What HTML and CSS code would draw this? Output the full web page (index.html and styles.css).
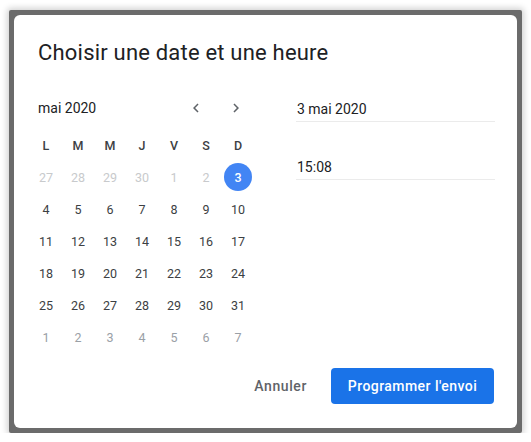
FILE: index.html
```html
<!DOCTYPE html>
<html lang="fr">
<head>
<meta charset="utf-8">
<link rel="stylesheet" href="styles.css">
</head>
<body>
<div class="frame">
  <div class="dialog">
    <h1 class="title">Choisir une date et une heure</h1>
    <div class="body">
      <div class="calendar">
        <div class="month-row">
          <span class="month">mai 2020</span>
          <div class="navs">
            <button class="nav" aria-label="Mois précédent"><svg viewBox="0 0 24 24" width="18" height="18"><path d="M15.41 7.41L14 6l-6 6 6 6 1.41-1.41L10.83 12z"/></svg></button>
            <button class="nav" aria-label="Mois suivant"><svg viewBox="0 0 24 24" width="18" height="18"><path d="M8.59 16.59L10 18l6-6-6-6-1.41 1.41L13.17 12z"/></svg></button>
          </div>
        </div>
        <div class="grid">
          <span class="head">L</span><span class="head">M</span><span class="head">M</span><span class="head">J</span><span class="head">V</span><span class="head">S</span><span class="head">D</span>
          <span class="day prev">27</span><span class="day prev">28</span><span class="day prev">29</span><span class="day prev">30</span><span class="day prev">1</span><span class="day prev">2</span><span class="day"><span class="sel">3</span></span>
          <span class="day">4</span><span class="day">5</span><span class="day">6</span><span class="day">7</span><span class="day">8</span><span class="day">9</span><span class="day">10</span>
          <span class="day">11</span><span class="day">12</span><span class="day">13</span><span class="day">14</span><span class="day">15</span><span class="day">16</span><span class="day">17</span>
          <span class="day">18</span><span class="day">19</span><span class="day">20</span><span class="day">21</span><span class="day">22</span><span class="day">23</span><span class="day">24</span>
          <span class="day">25</span><span class="day">26</span><span class="day">27</span><span class="day">28</span><span class="day">29</span><span class="day">30</span><span class="day">31</span>
          <span class="day next">1</span><span class="day next">2</span><span class="day next">3</span><span class="day next">4</span><span class="day next">5</span><span class="day next">6</span><span class="day next">7</span>
        </div>
      </div>
      <div class="fields">
        <div class="field">3 mai 2020</div>
        <div class="field">15:08</div>
      </div>
    </div>
    <div class="actions">
      <button class="btn-text">Annuler</button>
      <button class="btn-primary">Programmer l'envoi</button>
    </div>
  </div>
</div>
</body>
</html>
```

FILE: styles.css
```css
* { box-sizing: border-box; }
html, body { margin: 0; padding: 0; background: #ffffff; }
body { padding: 10px 0 0 9px; font-family: Roboto, "Liberation Sans", sans-serif; color: #3c4043; }

.frame {
  width: 513px;
  height: 423px;
  padding: 5px;
  background: #6b6b6b;
  border-radius: 2px;
  box-shadow: 0 0 6px 2px rgba(0,0,0,0.18);
}
.dialog {
  width: 503px;
  height: 413px;
  background: #ffffff;
  border-radius: 6px;
  padding: 24px 22px 0 16px;
  display: flex;
  flex-direction: column;
}
.title {
  margin: 0;
  padding-left: 8px;
  font-family: Roboto, "Liberation Sans", sans-serif;
  font-weight: 400;
  font-size: 22px;
  letter-spacing: 0.2px;
  line-height: 28px;
  color: #202124;
}
.body {
  display: flex;
  gap: 42px;
  margin-top: 25px;
}
.calendar { width: 224px; }
.month-row {
  height: 32px;
  display: flex;
  align-items: center;
}
.month {
  padding-left: 8px;
  font-size: 14px;
  line-height: 20px;
  color: #202124;
}
.navs {
  margin-left: auto;
  display: flex;
  gap: 16px;
  padding-right: 6px;
}
.nav {
  width: 24px;
  height: 24px;
  padding: 0;
  border: 0;
  background: transparent;
  display: flex;
  align-items: center;
  justify-content: center;
}
.nav svg { fill: #5f6368; }
.grid {
  margin-top: 5px;
  display: grid;
  grid-template-columns: repeat(7, 32px);
  grid-auto-rows: 32px;
}
.head, .day {
  display: flex;
  align-items: center;
  justify-content: center;
  font-size: 12.5px;
}
.head { font-weight: 500; color: #3c4043; }
.day { color: #3c4043; }
.day.prev { color: #c8cacc; }
.day.next { color: #9aa0a6; }
.sel {
  width: 28px;
  height: 28px;
  border-radius: 50%;
  background: #4285f4;
  color: #ffffff;
  font-weight: 500;
  display: flex;
  align-items: center;
  justify-content: center;
}
.fields {
  flex: 1;
  padding-top: 7px;
  display: flex;
  flex-direction: column;
  gap: 35px;
}
.field {
  font-size: 14px;
  line-height: 20px;
  color: #202124;
  padding: 0 0 2px 1px;
  border-bottom: 1px solid #ebebeb;
}
.actions {
  margin-top: auto;
  margin-bottom: 24px;
  display: flex;
  justify-content: flex-end;
  align-items: center;
  padding-right: 1px;
}
.btn-text {
  height: 36px;
  padding: 0 24px;
  border: 0;
  background: transparent;
  font-family: Roboto, "Liberation Sans", sans-serif;
  font-weight: 500;
  font-size: 14px;
  letter-spacing: 0.6px;
  color: #5f6368;
}
.btn-primary {
  width: 163px;
  height: 36px;
  padding: 0;
  border: 0;
  border-radius: 4px;
  background: #1a73e8;
  color: #ffffff;
  font-family: Roboto, "Liberation Sans", sans-serif;
  font-weight: 500;
  font-size: 14px;
  letter-spacing: 0.45px;
}
```
